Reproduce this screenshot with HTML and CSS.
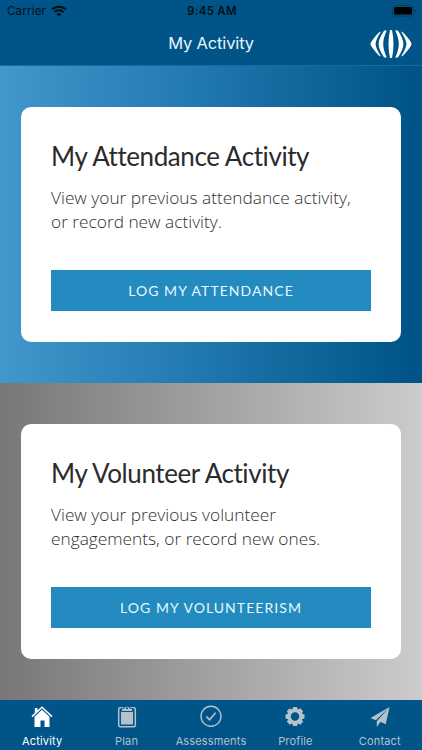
FILE: index.html
```html
<!DOCTYPE html>
<html lang="en">
<head>
    <meta charset="UTF-8">
    <meta name="viewport" content="width=device-width, initial-scale=1.0">
    <title>My Activity</title>
    <link rel="stylesheet" href="styles.css">
</head>
<body>
    <header class="header">
        <div class="status">
            <div class="carrier">
                <span class="carrier-name">Carrier</span>
                <svg class="wifi" viewBox="0 0 16 12">
                    <path d="M1 4.5a10 10 0 0 1 14 0M3.5 7.1a6.4 6.4 0 0 1 9 0" fill="none" stroke="#001019" stroke-width="2"/>
                    <path d="M8 11.5 5.6 9.1a3.4 3.4 0 0 1 4.8 0z" fill="#001019"/>
                </svg>
            </div>
            <span class="time">9:45 AM</span>
            <svg class="battery" viewBox="0 0 25 12">
                <rect x=".5" y=".5" width="21" height="10.6" rx="3" fill="none" stroke="#063b5c"/>
                <rect x="2" y="2" width="18" height="7.6" rx="1.6" fill="#000"/>
                <path d="M23 4v4q1.3-.6 1.3-2T23 4z" fill="#063b5c"/>
            </svg>
        </div>
        <div class="titlebar">
            <h1 class="page-title">My Activity</h1>
            <svg class="logo" viewBox="0 0 42 28" fill="#fff">
                <path d="M20 0h2Q23.500 7 23.500 14T22 28h-2Q18.500 21 18.500 14T20 0z"/>
                <path id="inner" d="M16.800 .5Q13.200 8 13.200 14t3.600 13.500h-2.600Q8.600 19.500 8.600 14T14.200 .5z"/>
                <path id="outer" d="M11 1.500Q5.600 10 5.600 14T11 26.500L8.800 25.500Q.6 16.500.4 14 .6 11.500 8.800 2.500z"/>
                <use href="#inner" transform="matrix(-1 0 0 1 42 0)"/>
                <use href="#outer" transform="matrix(-1 0 0 1 42 0)"/>
            </svg>
        </div>
    </header>

    <main class="content">
        <section class="panel panel-blue">
            <div class="card">
                <h2 class="card-title">My Attendance Activity</h2>
                <p class="card-text">View your previous attendance activity,<br>or record new activity.</p>
                <button class="btn">LOG MY ATTENDANCE</button>
            </div>
        </section>
        <section class="panel panel-gray">
            <div class="card">
                <h2 class="card-title">My Volunteer Activity</h2>
                <p class="card-text">View your previous volunteer<br>engagements, or record new ones.</p>
                <button class="btn">LOG MY VOLUNTEERISM</button>
            </div>
        </section>
    </main>

    <nav class="tabs">
        <a class="tab active">
            <svg class="tab-icon" viewBox="0 0 24 24">
                <path d="M2 12.600 12 3.200l10 9.400" fill="none" stroke="currentColor" stroke-width="1.500"/>
                <path d="M4.800 4h2.700v3L4.800 9.500zM12 5.800l7.500 7V23h-5v-6.500h-4V23h-6V12.800z" fill="currentColor"/>
            </svg>
            <span>Activity</span>
        </a>
        <a class="tab">
            <svg class="tab-icon" viewBox="0 0 24 24">
                <rect x="3.700" y="3.700" width="16.600" height="19" rx="1.500" fill="none" stroke="currentColor" stroke-width="1.500"/>
                <path d="M6 6.500h12V20.500H6z" fill="currentColor"/>
                <path d="M6.500 7.500V4.200h2.700a2.900 2.900 0 0 1 5.600 0h2.700v3.300z" fill="currentColor" stroke="#005487" stroke-width="1"/>
                <circle cx="12" cy="4.200" r="1" fill="#005487"/>
            </svg>
            <span>Plan</span>
        </a>
        <a class="tab">
            <svg class="tab-icon" viewBox="0 0 24 24" fill="none" stroke="currentColor" stroke-width="1.400">
                <circle cx="12" cy="12.300" r="10"/>
                <path d="m7.300 12.500 3.200 3.200 6.200-7" stroke-width="1.700"/>
            </svg>
            <span>Assessments</span>
        </a>
        <a class="tab">
            <svg class="tab-icon" viewBox="0 0 24 24">
                <circle cx="12" cy="12.500" r="6" fill="none" stroke="currentColor" stroke-width="3.600"/>
                <g fill="currentColor">
                    <path id="tooth" d="M10 3h4l1 4H9zM10 22h4l1-4H9zM2.500 10.500v4l4 1v-6zM21.500 10.500v4l-4 1v-6z"/>
                    <use href="#tooth" transform="rotate(45 12 12.500)"/>
                </g>
            </svg>
            <span>Profile</span>
        </a>
        <a class="tab">
            <svg class="tab-icon" viewBox="0 0 24 24" fill="currentColor">
                <path d="M21.500 3 2.500 14l5.300 2.200zM21.500 3 8.800 17.200V23l3-4.200zM21.500 3l-9.200 14.700 5.500 2.600z"/>
            </svg>
            <span>Contact</span>
        </a>
    </nav>
</body>
</html>
```
FILE: styles.css
```css
* {
    box-sizing: border-box;
}
body {
    margin: 0;
    height: 750px;
    display: flex;
    flex-direction: column;
    overflow: hidden;
    font-family: Inter, sans-serif;
}
h1, h2, p {
    margin: 0;
    font-weight: 400;
}
.header {
    height: 66px;
    background: #005487;
    border-bottom: 1px solid #21689a;
}
.status {
    display: grid;
    grid-template-columns: 1fr auto 1fr;
    align-items: center;
    height: 22px;
    padding: 0 5px 0 7px;
    color: #001019;
    font-size: 11.5px;
}
.carrier {
    display: flex;
    align-items: center;
    gap: 5px;
}
.carrier-name {
    letter-spacing: 0.2px;
}
.wifi {
    width: 16px;
    height: 12px;
}
.time {
    font-weight: 600;
    letter-spacing: 0.3px;
}
.battery {
    width: 25px;
    height: 12px;
    justify-self: end;
}
.titlebar {
    display: grid;
    grid-template-columns: 1fr auto 1fr;
    align-items: center;
    height: 43px;
    padding: 0 10px;
}
.page-title {
    grid-column: 2;
    color: #e8f4fb;
    font-size: 16.5px;
    line-height: 20px;
    letter-spacing: -0.15px;
    padding-bottom: 1px;
}
.logo {
    width: 42px;
    height: 28px;
    justify-self: end;
}
.content {
    flex: 1;
}
.panel {
    height: 317px;
    padding: 41px 21px;
}
.panel-blue {
    background: linear-gradient(to right, #4297cc, #2178af 47%, #005487 97%);
}
.panel-gray {
    background: linear-gradient(to right, #777, #ccc);
}
.card {
    height: 235px;
    padding: 31px 30px;
    display: flex;
    flex-direction: column;
    background: #fff;
    border-radius: 10px;
}
.card-title {
    color: #2b2b2d;
    font-family: Lato, sans-serif;
    font-size: 26px;
    line-height: 36px;
    letter-spacing: -0.42px;
    white-space: nowrap;
}
.card-text {
    margin-top: 12px;
    color: #303030;
    font-family: "Open Sans", sans-serif;
    font-size: 17.3px;
    font-weight: 300;
    line-height: 24.4px;
    white-space: nowrap;
}
.btn {
    height: 41px;
    margin-top: auto;
    padding: 0 0 1px;
    border: 0;
    background: #248bc0;
    color: #e5f8ff;
    font-family: Lato, sans-serif;
    font-size: 14px;
    letter-spacing: 1.05px;
}
.tabs {
    display: grid;
    grid-template-columns: repeat(5, 1fr);
    height: 50px;
    background: #005487;
}
.tab {
    display: flex;
    flex-direction: column;
    align-items: center;
    padding-top: 4px;
    gap: 6px;
    color: #b4c2cc;
    font-size: 11px;
    line-height: 14px;
    letter-spacing: 0.15px;
}
.tab.active {
    color: #fff;
}
.tab-icon {
    width: 24px;
    height: 24px;
}
```
